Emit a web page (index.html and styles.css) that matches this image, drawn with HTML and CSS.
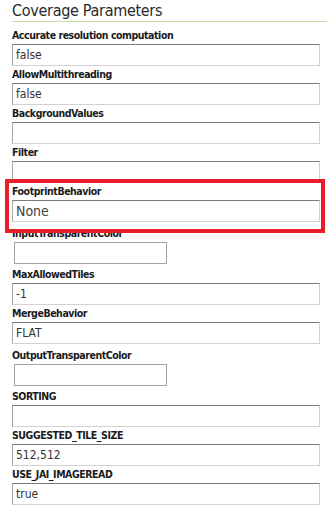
FILE: index.html
```html
<!DOCTYPE html>
<html lang="en">
<head>
  <meta charset="UTF-8">
  <meta name="viewport" content="width=device-width, initial-scale=1.0">
  <title>Coverage Parameters</title>
  <link rel="stylesheet" href="styles.css">
</head>
<body>
  <div class="panel">
    <h2>Coverage Parameters</h2>

    <div class="field first">
      <label>Accurate resolution computation</label>
      <input type="text" value="false">
    </div>
    <div class="field">
      <label>AllowMultithreading</label>
      <input type="text" value="false">
    </div>
    <div class="field">
      <label>BackgroundValues</label>
      <input type="text" value="">
    </div>
    <div class="field">
      <label>Filter</label>
      <input type="text" value="">
    </div>
    <div class="field">
      <label>FootprintBehavior</label>
      <input type="text" class="big" value="None">
    </div>
    <div class="field color">
      <label>InputTransparentColor</label>
      <input type="text" value="">
    </div>
    <div class="field">
      <label>MaxAllowedTiles</label>
      <input type="text" value="-1">
    </div>
    <div class="field">
      <label>MergeBehavior</label>
      <input type="text" value="FLAT">
    </div>
    <div class="field color">
      <label>OutputTransparentColor</label>
      <input type="text" value="">
    </div>
    <div class="field">
      <label>SORTING</label>
      <input type="text" value="">
    </div>
    <div class="field">
      <label>SUGGESTED_TILE_SIZE</label>
      <input type="text" value="512,512">
    </div>
    <div class="field">
      <label>USE_JAI_IMAGEREAD</label>
      <input type="text" value="true">
    </div>
  </div>

  <div class="highlight"></div>
</body>
</html>
```

FILE: styles.css
```css
body {
  margin: 0;
  position: relative;
  font-family: "DejaVu Sans Condensed", "DejaVu Sans", Verdana, sans-serif;
  color: #222;
}
.panel {
  padding-left: 12px;
}
h2 {
  margin: 0;
  padding-top: 1px;
  font-size: 16px;
  font-weight: normal;
  letter-spacing: -0.3px;
  line-height: 20px;
  color: #2a2a2a;
  border-bottom: 1px solid #c6dca4;
}
.field {
  width: 308px;
}
.field.first {
  margin-top: 5px;
}
label {
  display: block;
  font-size: 10.5px;
  font-weight: bold;
  letter-spacing: -0.45px;
  line-height: 17px;
  color: #1a1a1a;
}
input {
  display: block;
  box-sizing: border-box;
  width: 308px;
  height: 22px;
  margin: 0;
  padding: 0 3px;
  font-family: "DejaVu Sans Condensed", "DejaVu Sans", Verdana, sans-serif;
  font-size: 12px;
  color: #333;
  background: #fff;
  border: 1px solid #d2d2d2;
  border-top-color: #7c7c7c;
  border-left-color: #a8a8a8;
  outline: none;
}
input.big {
  font-size: 14px;
  color: #444;
}
.field.color {
  padding-bottom: 2px;
}
.field.color label {
  padding-top: 3px;
}
.field.color input {
  width: 153px;
  height: 22px;
  margin-left: 2px;
  border: 1px solid #a4a4a4;
}
.highlight {
  position: absolute;
  left: 5px;
  top: 179px;
  width: 312px;
  height: 46px;
  border: 4px solid #e81e2a;
}
```
